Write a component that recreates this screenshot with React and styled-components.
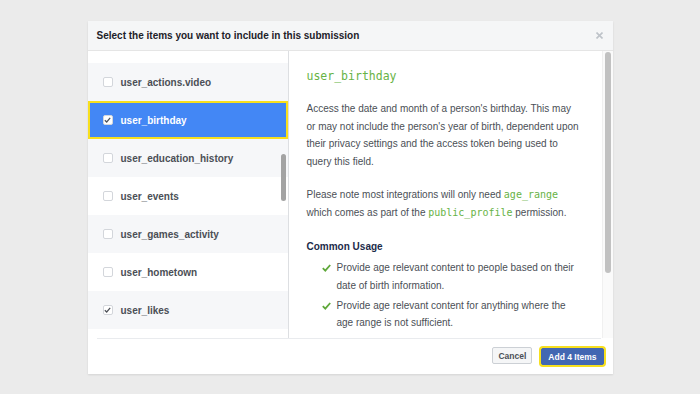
import React from 'react';
import styled, { createGlobalStyle } from 'styled-components';

const GlobalStyle = createGlobalStyle`
  html, body {
    margin: 0;
    padding: 0;
    background: #ebebeb;
    font-family: 'Liberation Sans', Arial, sans-serif;
  }
`;

const Page = styled.div`
  display: flex;
  justify-content: center;
  padding-top: 21px;
  height: 394px;
  box-sizing: border-box;
`;

const Modal = styled.div`
  width: 525px;
  height: 353px;
  background: #fff;
  display: flex;
  flex-direction: column;
  box-shadow: 0 1px 2px rgba(0, 0, 0, 0.1);
`;

const Header = styled.div`
  height: 30px;
  flex: none;
  display: flex;
  align-items: center;
  justify-content: space-between;
  padding: 0 10px 0 9px;
  background: #f5f6f7;
  border-bottom: 1px solid #e5e5e5;
  box-sizing: border-box;
  font-size: 10px;
  font-weight: bold;
  color: #1d2129;
`;

const Close = styled.button`
  border: 0;
  background: none;
  padding: 0;
  display: flex;
  color: #bec3c9;
`;

const Body = styled.div`
  flex: 1;
  display: flex;
  min-height: 0;
`;

const ListViewport = styled.div`
  position: relative;
  width: 200px;
  flex: none;
  overflow: hidden;
  border-right: 1px solid #dddfe2;
`;

const List = styled.ul`
  list-style: none;
  margin: 0;
  padding: 12px 0 0;
`;

const Row = styled.li`
  height: 38px;
  display: flex;
  align-items: center;
  gap: 8px;
  padding-left: 15px;
  box-sizing: border-box;
  font-size: 10px;
  font-weight: bold;
  background: ${({ $striped }) => ($striped ? '#f6f7f9' : '#fff')};
  color: #4b4f56;

  &[data-active='true'] {
    background: #4387f5;
    color: #fff;
    box-shadow: inset 0 0 0 2px #f7df1e;
  }
`;

const Box = styled.span`
  width: 10px;
  height: 10px;
  flex: none;
  box-sizing: border-box;
  border: 1px solid #d3d6db;
  border-radius: 2px;
  background: #fff;
  display: flex;
  align-items: center;
  justify-content: center;
`;

const ListThumb = styled.div`
  position: absolute;
  right: 2px;
  top: 103px;
  width: 5px;
  height: 47px;
  border-radius: 3px;
  background: #a3a3a3;
`;

const Detail = styled.div`
  flex: 1;
  display: flex;
  min-width: 0;
`;

const Content = styled.div`
  flex: 1;
  padding: 17px 20.5px 0 18px;
  color: #4b4f56;
  font-size: 10px;
  line-height: 17.7px;
`;

const Title = styled.h2`
  margin: 0;
  font-family: 'DejaVu Sans Mono', 'Liberation Mono', monospace;
  font-weight: normal;
  font-size: 11.5px;
  line-height: 16px;
  color: #67b346;
`;

const Para = styled.p`
  margin: ${({ $top }) => $top}px 0 0;
`;

const Code = styled.code`
  font-family: 'DejaVu Sans Mono', 'Liberation Mono', monospace;
  font-size: 10px;
  color: #67b346;
`;

const SubHead = styled.h3`
  margin: 17px 0 0;
  font-size: 10px;
  line-height: 18px;
  font-weight: bold;
  color: #1c2b4a;
`;

const Usage = styled.ul`
  list-style: none;
  margin: 3px 0 0;
  padding: 0 0 0 15px;
  display: flex;
  flex-direction: column;
  gap: 2px;
`;

const UsageItem = styled.li`
  display: flex;
  gap: 6px;

  svg {
    flex: none;
    margin-top: 5px;
  }
`;

const Track = styled.div`
  width: 11px;
  flex: none;
  background: #fafafa;
  border-left: 1px solid #f0f0f0;
  box-sizing: border-box;
  padding: 1px 0 0 2px;
`;

const Thumb = styled.div`
  width: 6px;
  height: 221px;
  border-radius: 3px;
  background: #c1c1c1;
`;

const Footer = styled.div`
  position: relative;
  height: 36px;
  flex: none;
  display: flex;
  align-items: center;
  justify-content: flex-end;
  gap: 9px;
  padding-right: 9px;

  &::before {
    content: '';
    position: absolute;
    top: 0;
    left: 9px;
    right: 12px;
    height: 1px;
    background: #e9ebee;
  }
`;

const Button = styled.button`
  height: 17px;
  padding: 0 ${({ $primary }) => ($primary ? 6 : 5)}px;
  box-sizing: border-box;
  border-radius: 2px;
  font-family: 'Liberation Sans', Arial, sans-serif;
  font-size: 8.5px;
  font-weight: bold;
  border: 1px solid ${({ $primary }) => ($primary ? '#4267b2' : '#ccd0d5')};
  background: ${({ $primary }) => ($primary ? '#4267b2' : '#f5f6f7')};
  color: ${({ $primary }) => ($primary ? '#fff' : '#4b4f56')};
  box-shadow: ${({ $primary }) => ($primary ? '0 0 0 2px #f7df1e' : 'none')};
  margin-top: ${({ $primary }) => ($primary ? '1px' : '-1px')};
`;

const items = [
  { name: 'user_actions.video' },
  { name: 'user_birthday', checked: true, active: true },
  { name: 'user_education_history' },
  { name: 'user_events' },
  { name: 'user_games_activity' },
  { name: 'user_hometown' },
  { name: 'user_likes', checked: true },
];

const Tick = ({ color = '#4b4f56' }) => (
  <svg width="7" height="6" viewBox="0 0 7 6">
    <polyline points="0.8,3.2 2.7,5 6.2,0.8" fill="none" stroke={color} strokeWidth="1.2" />
  </svg>
);

const GreenCheck = () => (
  <svg width="9" height="8" viewBox="0 0 9 8">
    <polyline points="0.8,4.2 3.3,6.6 8.2,1" fill="none" stroke="#5fa83a" strokeWidth="1.8" />
  </svg>
);

const App = () => (
  <>
    <GlobalStyle />
    <Page>
      <Modal>
        <Header>
          Select the items you want to include in this submission
          <Close aria-label="Close">
            <svg width="7" height="7" viewBox="0 0 7 7">
              <path d="M0.5 0.5 L6.5 6.5 M6.5 0.5 L0.5 6.5" stroke="currentColor" strokeWidth="1.6" />
            </svg>
          </Close>
        </Header>
        <Body>
          <ListViewport>
            <List>
              {items.map((item, i) => (
                <Row key={item.name} $striped={i % 2 === 0} data-active={!!item.active}>
                  <Box>{item.checked && <Tick />}</Box>
                  {item.name}
                </Row>
              ))}
            </List>
            <ListThumb />
          </ListViewport>
          <Detail>
            <Content>
              <Title>user_birthday</Title>
              <Para $top={16}>
                Access the date and month of a person's birthday. This may or may not include the
                person's year of birth, dependent upon their privacy settings and the access token
                being used to query this field.
              </Para>
              <Para $top={15}>
                Please note most integrations will only need <Code>age_range</Code> which comes as
                part of the <Code>public_profile</Code> permission.
              </Para>
              <SubHead>Common Usage</SubHead>
              <Usage>
                <UsageItem>
                  <GreenCheck />
                  <span>Provide age relevant content to people based on their date of birth information.</span>
                </UsageItem>
                <UsageItem>
                  <GreenCheck />
                  <span>Provide age relevant content for anything where the age range is not sufficient.</span>
                </UsageItem>
              </Usage>
            </Content>
            <Track>
              <Thumb />
            </Track>
          </Detail>
        </Body>
        <Footer>
          <Button>Cancel</Button>
          <Button $primary>Add 4 Items</Button>
        </Footer>
      </Modal>
    </Page>
  </>
);

export default App;
